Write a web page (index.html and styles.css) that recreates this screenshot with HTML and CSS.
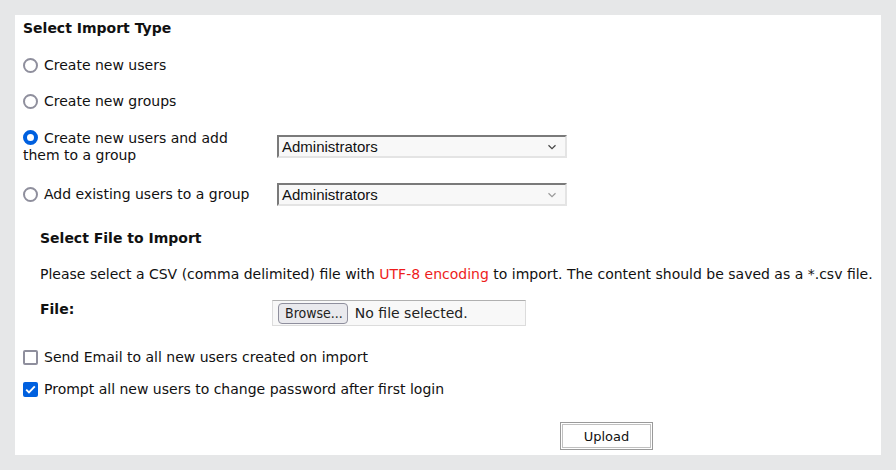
FILE: index.html
```html
<!DOCTYPE html>
<html>
<head>
<meta charset="utf-8">
<link rel="stylesheet" href="styles.css">
</head>
<body>
<div class="panel">
  <h3 class="title">Select Import Type</h3>
  <div class="options">
    <label class="opt"><span class="radio"></span><span>Create new users</span></label>
    <label class="opt"><span class="radio"></span><span>Create new groups</span></label>
    <div class="opt-row">
      <label class="opt wrap"><span class="radio on"></span><span>Create new users and add them to a group</span></label>
      <div class="select"><span>Administrators</span><svg width="10" height="6" viewBox="0 0 10 6"><path d="M1.5 1.2 L5 4.6 L8.5 1.2" fill="none" stroke="#444" stroke-width="1.2"/></svg></div>
    </div>
    <div class="opt-row">
      <label class="opt"><span class="radio"></span><span>Add existing users to a group</span></label>
      <div class="select"><span>Administrators</span><svg width="10" height="6" viewBox="0 0 10 6"><path d="M1.5 1.2 L5 4.6 L8.5 1.2" fill="none" stroke="#999" stroke-width="1.2"/></svg></div>
    </div>
  </div>
  <div class="file-section">
    <h3 class="title">Select File to Import</h3>
    <p class="note">Please select a CSV (comma delimited) file with <span class="red">UTF-8 encoding</span> to import. The content should be saved as a *.csv file.</p>
    <div class="file-row">
      <span class="file-label">File:</span>
      <div class="file-input"><span class="browse">Browse...</span><span class="none">No file selected.</span></div>
    </div>
  </div>
  <label class="opt check-row"><span class="check"></span><span>Send Email to all new users created on import</span></label>
  <label class="opt check-row"><span class="check on"><svg width="11" height="9" viewBox="0 0 11 9"><path d="M1.2 4.6 L4 7.4 L9.8 1.4" fill="none" stroke="#fff" stroke-width="1.9"/></svg></span><span>Prompt all new users to change password after first login</span></label>
  <div class="actions"><button class="upload">Upload</button></div>
</div>
</body>
</html>
```
FILE: styles.css
```css
html, body {
  margin: 0;
  padding: 0;
}
body {
  background: #e6e7e8;
  font-family: "DejaVu Sans", Verdana, sans-serif;
  font-size: 14px;
  line-height: 17px;
  color: #111;
  width: 896px;
  height: 470px;
  overflow: hidden;
}
.panel {
  margin: 15px 0 0 15px;
  width: 866px;
  height: 440px;
  background: #fff;
  box-sizing: border-box;
  padding: 5px 8px 0 8px;
}
.title {
  margin: 0;
  font-size: 14px;
  font-weight: bold;
  line-height: 17px;
}
.options {
  display: flex;
  flex-direction: column;
  gap: 19px;
  margin-top: 20px;
}
.opt {
  display: flex;
  align-items: flex-start;
  gap: 6px;
}
.opt-row {
  display: flex;
  align-items: center;
}
.opt-row .opt {
  width: 254px;
  flex: none;
}
.opt-row .opt.wrap {
  display: block;
  width: 230px;
  margin-right: 24px;
}
.opt.wrap .radio {
  margin-right: 6px;
  vertical-align: -2px;
}
.radio {
  display: inline-block;
  width: 15px;
  height: 15px;
  box-sizing: border-box;
  border: 2px solid #8f8f9d;
  border-radius: 50%;
  flex: none;
  margin-top: 1px;
}
.radio.on {
  border: 4px solid #0060df;
  box-shadow: inset 0 0 0 1px #fff;
}
.select {
  width: 290px;
  height: 23px;
  box-sizing: border-box;
  border: 2px solid #a0a0a0;
  border-top-color: #7a7a7a;
  border-left-color: #7a7a7a;
  border-right-color: #e4e4e4;
  border-bottom-color: #e4e4e4;
  background: #f8f8f8;
  display: flex;
  align-items: center;
  justify-content: space-between;
  padding: 0 8px 0 3px;
  font-family: "Liberation Sans", Arial, sans-serif;
  font-size: 15px;
  color: #111;
}
.file-section {
  padding-left: 17px;
  margin-top: 24px;
}
.note {
  margin: 19px 0 0 0;
}
.red {
  color: #ee1c1c;
}
.file-row {
  display: flex;
  align-items: flex-start;
  margin-top: 17px;
}
.file-label {
  font-weight: bold;
  width: 232px;
  margin-top: 1px;
}
.file-input {
  width: 254px;
  height: 26px;
  box-sizing: border-box;
  border: 1px solid #dcdcdc;
  border-top-color: #b0b0b0;
  background: #f8f8f8;
  display: flex;
  align-items: center;
  padding-left: 5px;
  gap: 7px;
  color: #222;
}
.browse {
  border: 1px solid #8f8f9d;
  border-radius: 4px;
  background: #e9e9ed;
  height: 21px;
  box-sizing: border-box;
  padding: 0 4px 0 6px;
  line-height: 19px;
  font-family: "DejaVu Sans Condensed", "DejaVu Sans", sans-serif;
  font-stretch: condensed;
  font-size: 14px;
}
.check-row {
  margin-top: 15px;
}
.file-section + .check-row {
  margin-top: 23px;
}
.check {
  width: 15px;
  height: 15px;
  box-sizing: border-box;
  border: 2px solid #8f8f9d;
  border-radius: 2px;
  flex: none;
  margin-top: 1px;
  display: flex;
  align-items: center;
  justify-content: center;
}
.check.on {
  background: #0060df;
  border-color: #0060df;
}
.actions {
  display: flex;
  padding-left: 537px;
  margin-top: 24px;
}
.upload {
  width: 93px;
  height: 28px;
  background: #fff;
  border: 1px solid #9a9a9a;
  box-shadow: inset 0 0 0 1px #fff, inset 0 0 0 2px #c0c0c0;
  font-family: "DejaVu Sans", Verdana, sans-serif;
  font-size: 13px;
  color: #111;
  padding: 0;
}
```
